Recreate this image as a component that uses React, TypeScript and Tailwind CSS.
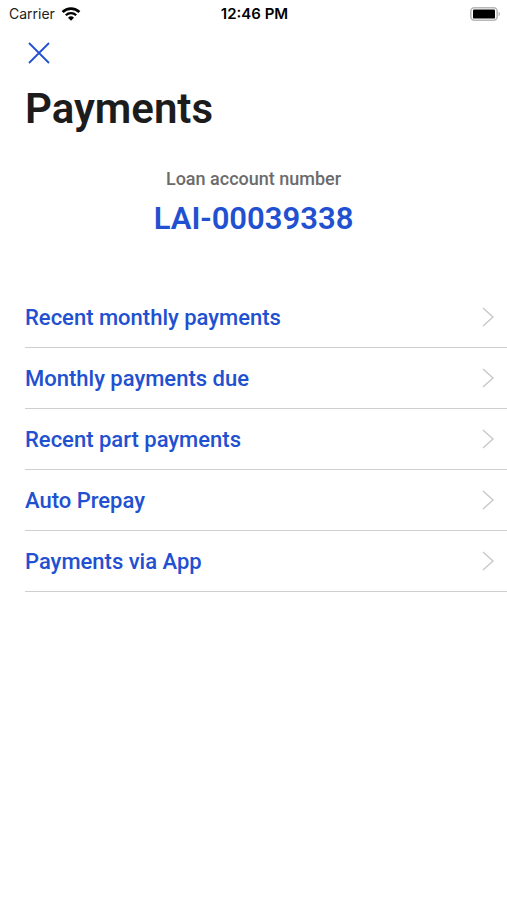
const menuItems = [
  { label: "Recent monthly payments", href: "#monthly" },
  { label: "Monthly payments due", href: "#due" },
  { label: "Recent part payments", href: "#part" },
  { label: "Auto Prepay", href: "#prepay" },
  { label: "Payments via App", href: "#app" },
];

function StatusBar() {
  return (
    <div className="grid h-7 grid-cols-3 items-center pr-1.5 pl-2 font-['Inter',sans-serif] text-sm text-black">
      <div className="flex items-center gap-1.5 pl-px">
        <span className="text-[#222222]">Carrier</span>
        <svg width="20" height="14" viewBox="0 0 20 14" fill="none" stroke="currentColor">
          <path d="M1.6 5a12 12 0 0 1 16.8 0" strokeWidth="2.7" />
          <path d="M4.8 8.3a7.4 7.4 0 0 1 10.4 0" strokeWidth="2.3" />
          <path d="M10 13.8 7 10.7a4.3 4.3 0 0 1 6 0z" fill="currentColor" stroke="none" />
        </svg>
      </div>
      <span className="text-center text-[15px] font-semibold">12:46 PM</span>
      <svg className="justify-self-end" width="31" height="14" viewBox="0 0 31 14" fill="none">
        <rect x="0.8" y="0.8" width="26.4" height="12.4" rx="3.6" stroke="#b8b8b8" strokeWidth="1.6" />
        <rect x="3" y="2.4" width="22" height="9.2" rx="1.2" fill="#000" />
        <path d="M28.6 4.8c2 .8 2 3.6 0 4.4z" fill="#b8b8b8" />
      </svg>
    </div>
  );
}

function MenuRow({ label, href }: { label: string; href: string }) {
  return (
    <li className="border-b border-[#cfcfcf]">
      <a href={href} className="flex h-15 items-center justify-between pr-3">
        <span>{label}</span>
        <svg width="13" height="20" viewBox="0 0 13 20" fill="none" stroke="#c8c8c8" strokeWidth="1.4">
          <path d="M1 1l10 9-10 9" />
        </svg>
      </a>
    </li>
  );
}

export default function App() {
  return (
    <div className="min-h-screen bg-white font-['Roboto',sans-serif]">
      <StatusBar />
      <header className="px-[25px]">
        <button
          type="button"
          aria-label="Close"
          className="mt-[11px] flex size-7 items-center justify-center text-[#2150d0]"
        >
          <svg width="22" height="22" viewBox="0 0 22 22" fill="none" stroke="currentColor" strokeWidth="1.8">
            <path d="M1 1l20 20M21 1L1 21" />
          </svg>
        </button>
        <h1 className="mt-[18px] text-[42px] leading-12 font-semibold text-[#1c1c1c]">Payments</h1>
      </header>
      <main>
        <section className="mt-[34px] text-center">
          <p className="text-lg leading-6 font-medium text-[#6b6b6b]">Loan account number</p>
          <p className="mt-2 text-[31px] leading-10 font-semibold text-[#2150d0]">LAI-00039338</p>
        </section>
        <ul className="mt-12 ml-[25px] text-[22px] font-medium text-[#2150d0]">
          {menuItems.map((item) => (
            <MenuRow key={item.href} {...item} />
          ))}
        </ul>
      </main>
    </div>
  );
}
